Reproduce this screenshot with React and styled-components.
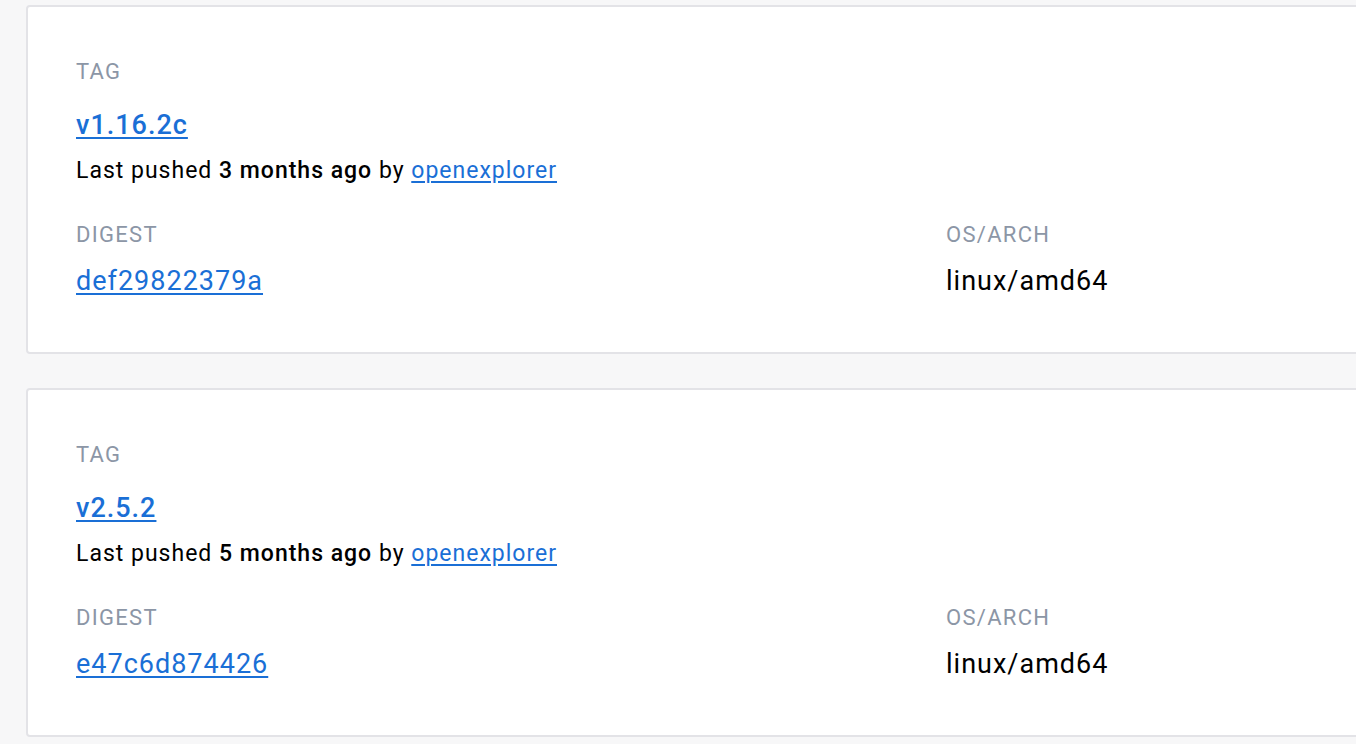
import styled, { createGlobalStyle } from "styled-components";

const GlobalStyle = createGlobalStyle`
  html, body {
    margin: 0;
    padding: 0;
    background: #f7f7f8;
    overflow: hidden;
  }
  body {
    font-family: Roboto, "Liberation Sans", sans-serif;
    color: #000;
  }
`;

const tags = [
  { name: "v1.16.2c", pushed: "3 months ago", by: "openexplorer", digest: "def29822379a", os: "linux/amd64" },
  { name: "v2.5.2", pushed: "5 months ago", by: "openexplorer", digest: "e47c6d874426", os: "linux/amd64" },
];

const App = () => {
  return (
    <>
      <GlobalStyle />
      <Page>
        {tags.map(tag => (
          <TagCard key={tag.name}>
            <Label>TAG</Label>
            <TagName href="#">{tag.name}</TagName>
            <Meta>
              Last pushed <b>{tag.pushed}</b> by <a href="#">{tag.by}</a>
            </Meta>
            <Details>
              <div>
                <Label>DIGEST</Label>
                <Value as="a" href="#" $link>{tag.digest}</Value>
              </div>
              <div>
                <Label>OS/ARCH</Label>
                <Value>{tag.os}</Value>
              </div>
            </Details>
          </TagCard>
        ))}
      </Page>
    </>
  );
};

export default App;

const Page = styled.div`
  display: flex;
  flex-direction: column;
  gap: 34px;
  padding: 5px 0 0 26px;
  width: 1500px;
`;

const TagCard = styled.div`
  display: flex;
  flex-direction: column;
  align-items: flex-start;
  background: #fff;
  border: 2px solid #e3e3e7;
  border-radius: 4px;
  padding: 51px 48px 53px;
`;

const Label = styled.div`
  font-size: 22px;
  line-height: 28px;
  letter-spacing: 1.3px;
  color: #8c96a6;
  text-transform: uppercase;
`;

const TagName = styled.a`
  margin-top: 21px;
  font-size: 27px;
  line-height: 36px;
  letter-spacing: 1px;
  font-weight: 500;
  color: #1a6fd6;
  text-decoration: underline;
  text-underline-offset: 3px;
`;

const Meta = styled.div`
  margin-top: 13px;
  font-size: 23px;
  line-height: 30px;
  letter-spacing: 1px;
  color: #000;
  b {
    font-weight: 500;
  }
  a {
    color: #1a6fd6;
    text-decoration: underline;
    text-underline-offset: 3px;
  }
`;

const Details = styled.div`
  display: grid;
  grid-template-columns: 870px 1fr;
  margin-top: 35px;
  width: 100%;
`;

const Value = styled.div`
  display: block;
  margin-top: 14px;
  font-size: 27px;
  line-height: 36px;
  letter-spacing: 1px;
  color: ${p => (p.$link ? "#1a6fd6" : "#000")};
  text-decoration: ${p => (p.$link ? "underline" : "none")};
  text-underline-offset: 3px;
`;
